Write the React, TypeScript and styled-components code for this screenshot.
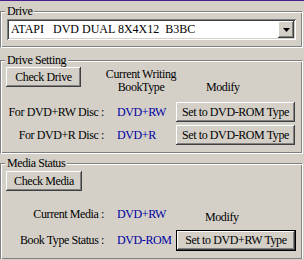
import styled, { createGlobalStyle, css } from "styled-components"

const GlobalStyle = createGlobalStyle`
    html, body {
        margin: 0;
        background: #d4d0c8;
    }
    body {
        font-family: "Liberation Serif", "Times New Roman", serif;
        font-size: 12px;
        color: #000;
    }
`

const WindowStyle = styled.div`
    width: 304px;
    height: 259px;
    box-sizing: border-box;
    border-top: 1px solid #4b1d8f;
    padding: 10px 1px 0 0;
    overflow: hidden;
    letter-spacing: -0.4px;
`

const GroupStyle = styled.section<{ $mt: number; $pad: string }>`
    position: relative;
    margin-top: ${(p) => p.$mt}px;
    border: 1px solid;
    border-color: #808080 #fff #fff #808080;
    box-shadow: inset 1px 1px 0 #fff, inset -1px -1px 0 #808080;
    padding: ${(p) => p.$pad};
`

const LegendStyle = styled.span`
    position: absolute;
    top: -8px;
    left: 4px;
    padding: 0 2px;
    line-height: 14px;
    background: #d4d0c8;
`

const ComboStyle = styled.div`
    display: flex;
    height: 21px;
    box-sizing: border-box;
    padding: 2px;
    background: #fff;
    box-shadow: inset 1px 1px 0 #808080, inset -1px -1px 0 #fff, inset 2px 2px 0 #404040, inset -2px -2px 0 #d4d0c8;
`

const ComboTextStyle = styled.div`
    flex: 1;
    padding-left: 2px;
    line-height: 17px;
    white-space: pre;
    letter-spacing: 0;
`

const bevel = css`
    background: #d4d0c8;
    box-shadow: inset -1px -1px 0 #404040, inset 1px 1px 0 #fff, inset -2px -2px 0 #808080, inset 2px 2px 0 #d4d0c8;
`

const DropButtonStyle = styled.div`
    ${bevel};
    width: 16px;
    height: 17px;
    display: flex;
    align-items: center;
    justify-content: center;
`

const ButtonStyle = styled.button<{ $width: number; $default?: boolean }>`
    ${bevel};
    width: ${(p) => p.$width}px;
    height: 20px;
    box-sizing: border-box;
    border: none;
    padding: 0;
    margin: 0;
    font: inherit;
    letter-spacing: inherit;
    color: #000;
    white-space: nowrap;
    ${(p) =>
        p.$default &&
        css`
            height: 21px;
            border: 1px solid #000;
        `}
`

const HeaderStyle = styled.div`
    display: flex;
    align-items: flex-start;
    height: 35px;
`

const CaptionStyle = styled.div<{ $ml: number; $mt: number; $width?: number }>`
    margin-left: ${(p) => p.$ml}px;
    margin-top: ${(p) => p.$mt}px;
    width: ${(p) => (p.$width ? `${p.$width}px` : "auto")};
    line-height: 13px;
    text-align: center;
    white-space: nowrap;
`

const RowsStyle = styled.div<{ $mt: number }>`
    display: grid;
    grid-template-columns: 98px 72px 120px;
    grid-auto-rows: auto;
    row-gap: 3px;
    margin-top: ${(p) => p.$mt}px;
`

const LabelStyle = styled.div`
    display: flex;
    align-items: center;
    justify-content: flex-end;
    height: 20px;
    white-space: nowrap;
`

const ValueStyle = styled.div`
    display: flex;
    align-items: center;
    height: 20px;
    padding-left: 13px;
    color: #0000a0;
    white-space: nowrap;
`

const CellStyle = styled.div<{ $pl?: number; $pt?: number }>`
    display: flex;
    align-items: center;
    height: 20px;
    padding-left: ${(p) => p.$pl ?? 0}px;
    padding-top: ${(p) => p.$pt ?? 0}px;
    white-space: nowrap;
`

const Arrow = () => (
    <svg width="7" height="4" viewBox="0 0 7 4">
        <path d="M0 0h7L3.5 4z" fill="#000" />
    </svg>
)

export default function App() {
    return (
        <>
            <GlobalStyle />
            <WindowStyle>
                <GroupStyle $mt={0} $pad="7px 6px">
                    <LegendStyle>Drive</LegendStyle>
                    <ComboStyle>
                        <ComboTextStyle>{"ATAPI   DVD DUAL 8X4X12  B3BC"}</ComboTextStyle>
                        <DropButtonStyle>
                            <Arrow />
                        </DropButtonStyle>
                    </ComboStyle>
                </GroupStyle>

                <GroupStyle $mt={12} $pad="6px 5px 8px">
                    <LegendStyle>Drive Setting</LegendStyle>
                    <HeaderStyle>
                        <ButtonStyle $width={75}>Check Drive</ButtonStyle>
                        <CaptionStyle $ml={17} $mt={1} $width={86}>
                            Current Writing
                            <br />
                            BookType
                        </CaptionStyle>
                        <CaptionStyle $ml={22} $mt={14}>
                            Modify
                        </CaptionStyle>
                    </HeaderStyle>
                    <RowsStyle $mt={0}>
                        <LabelStyle>For DVD+RW Disc :</LabelStyle>
                        <ValueStyle>DVD+RW</ValueStyle>
                        <ButtonStyle $width={119}>Set to DVD-ROM Type</ButtonStyle>
                        <LabelStyle>For DVD+R Disc :</LabelStyle>
                        <ValueStyle>DVD+R</ValueStyle>
                        <ButtonStyle $width={119}>Set to DVD-ROM Type</ButtonStyle>
                    </RowsStyle>
                </GroupStyle>

                <GroupStyle $mt={9} $pad="7px 5px 8px">
                    <LegendStyle>Media Status</LegendStyle>
                    <ButtonStyle $width={76}>Check Media</ButtonStyle>
                    <RowsStyle $mt={13}>
                        <LabelStyle>Current Media :</LabelStyle>
                        <ValueStyle>DVD+RW</ValueStyle>
                        <CellStyle $pl={29} $pt={3}>
                            Modify
                        </CellStyle>
                        <LabelStyle>Book Type Status :</LabelStyle>
                        <ValueStyle>DVD-ROM</ValueStyle>
                        <ButtonStyle $width={120} $default>
                            Set to DVD+RW Type
                        </ButtonStyle>
                    </RowsStyle>
                </GroupStyle>
            </WindowStyle>
        </>
    )
}
